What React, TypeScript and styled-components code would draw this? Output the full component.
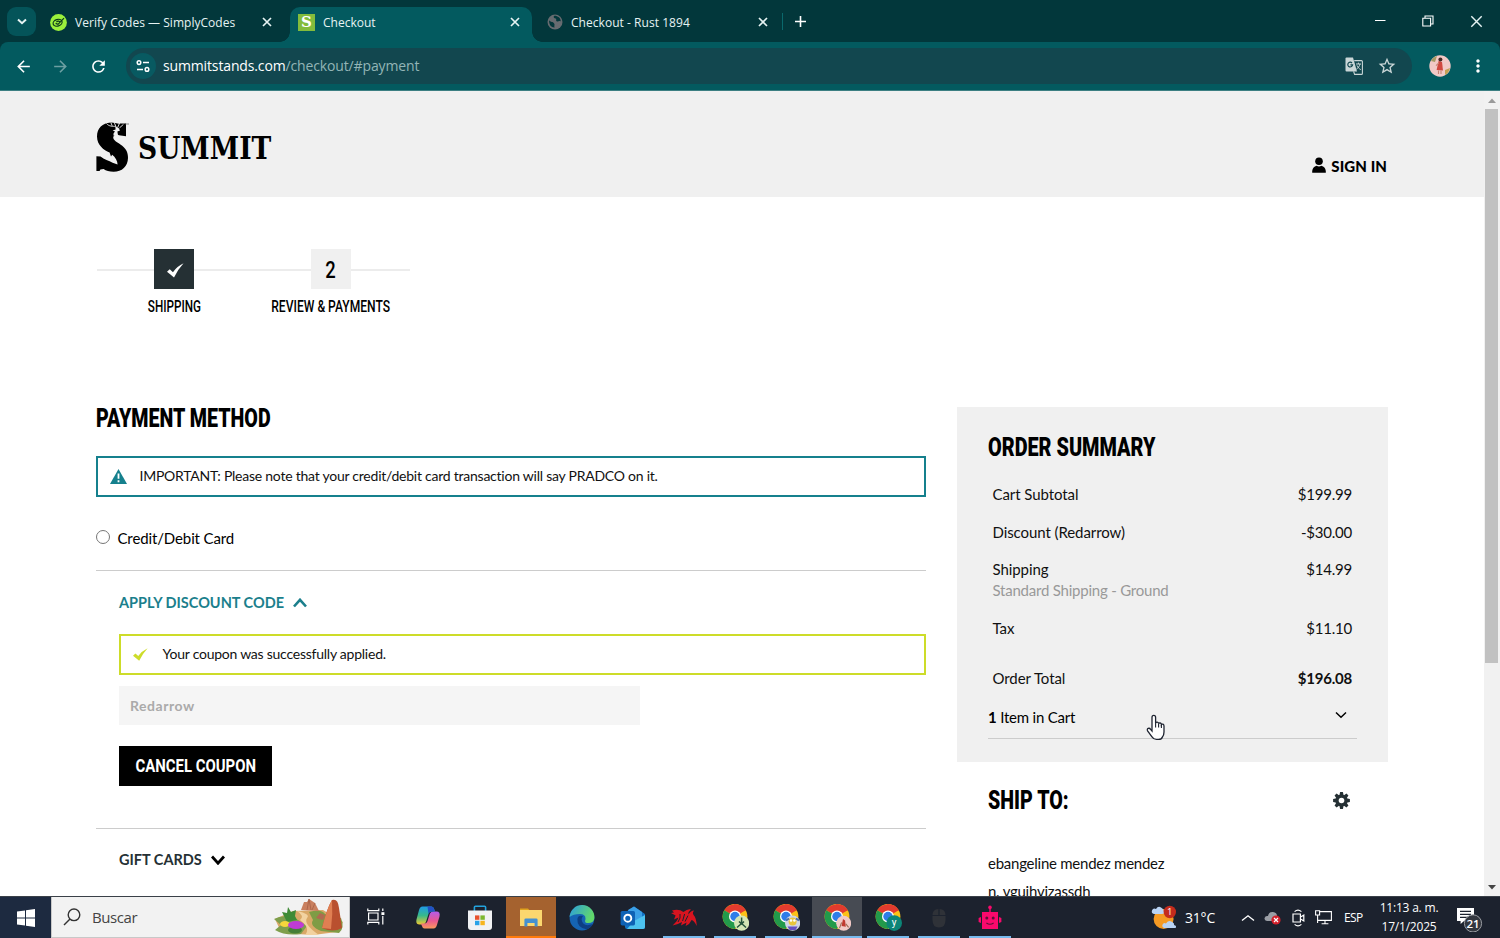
import React from "react";
import styled, { createGlobalStyle, css } from "styled-components";
import { MdArrowBack, MdArrowForward, MdRefresh, MdStarBorder, MdMoreVert } from "react-icons/md";

const ui = `"Open Sans", "Noto Sans", sans-serif`;
const body = `Lato, "Open Sans", sans-serif`;
const display = `Roboto, "Liberation Sans", sans-serif`;

const Global = createGlobalStyle`
  *, *::before, *::after { box-sizing: border-box; }
  body { margin: 0; background: #fff; overflow: hidden; }
  svg { display: block; flex: none; }
`;

const Screen = styled.div`
  display: flex;
  flex-direction: column;
  width: 1500px;
  height: 938px;
  overflow: hidden;
  position: relative;
  color: #000;
  font-family: ${body};
`;

/* ---------- text ---------- */

const Condensed = styled.span<{ $x: number; $origin?: string }>`
  display: inline-block;
  white-space: nowrap;
  transform: scaleX(${(p) => p.$x});
  transform-origin: ${(p) => p.$origin ?? "left"} center;
`;

/* ---------- browser window ---------- */

const TabStrip = styled.div`
  display: flex;
  height: 42px;
  background: #02373b;
  color: #e6f3f3;
  font: 12px/1 ${ui};
  padding-left: 7px;
`;

const TabSearch = styled.div`
  width: 29px;
  height: 29px;
  margin-top: 7px;
  border-radius: 9px;
  background: #045459;
  display: grid;
  place-items: center;
`;

const Tab = styled.div<{ $width: number; $active?: boolean; $left?: number; $right?: number }>`
  position: relative;
  display: flex;
  align-items: center;
  width: ${(p) => p.$width}px;
  height: 35px;
  margin-top: 7px;
  padding: 0 ${(p) => p.$right ?? 12}px 5px ${(p) => p.$left ?? 8}px;
  ${(p) =>
    p.$active &&
    css`
      background: #035a5f;
      border-radius: 10px 10px 0 0;
      &::before,
      &::after {
        content: "";
        position: absolute;
        bottom: 0;
        width: 10px;
        height: 10px;
      }
      &::before {
        left: -10px;
        background: radial-gradient(circle at 0 0, transparent 9.5px, #035a5f 10px);
      }
      &::after {
        right: -10px;
        background: radial-gradient(circle at 100% 0, transparent 9.5px, #035a5f 10px);
      }
    `}
`;

const TabTitle = styled.span<{ $spacing?: number }>`
  flex: 1;
  margin-left: 8px;
  padding-top: 1px;
  white-space: nowrap;
  letter-spacing: ${(p) => p.$spacing ?? 0}px;
`;

const TabDivider = styled.i`
  width: 1px;
  height: 17px;
  margin: 13px 12px 0 3px;
  background: #0a686c;
`;

const NewTab = styled.div`
  margin-top: 16px;
`;

const WindowButtons = styled.div`
  display: flex;
  gap: 36px;
  margin: 15px 17px 0 auto;
`;

const ToolbarBack = styled.div`
  background: #02373b;
`;

const Toolbar = styled.div`
  display: flex;
  align-items: center;
  height: 49px;
  padding: 0 12px 0 14px;
  background: #035a5f;
  border-bottom: 1px solid #3c7f82;
  border-radius: 8px 8px 0 0;
  color: #fff;
`;

const NavIcon = styled.span<{ $dim?: boolean; $gap: number }>`
  font-size: 19px;
  display: flex;
  margin-right: ${(p) => p.$gap}px;
  opacity: ${(p) => (p.$dim ? 0.42 : 1)};
`;

const Omnibox = styled.div`
  display: flex;
  align-items: center;
  flex: 1;
  height: 36px;
  border-radius: 18px;
  background: #12474f;
  padding: 0 15px 0 4px;
  font: 14px/1 ${ui};
  color: #fff;
`;

const SiteInfo = styled.span`
  width: 26px;
  height: 26px;
  border-radius: 50%;
  background: #085a61;
  display: grid;
  place-items: center;
  margin-right: 7px;
`;

const Url = styled.span`
  flex: 1;
  letter-spacing: -0.14px;
  em {
    font-style: normal;
    color: #93b5b6;
  }
`;

const StarButton = styled.span`
  display: flex;
  margin-left: 14px;
  font-size: 20px;
  color: #c9d6d7;
`;

const AvatarButton = styled.span`
  margin: 0 17px 0 17px;
`;

/* ---------- page ---------- */

const Viewport = styled.div`
  display: flex;
  height: 805px;
  background: #fff;
`;

const Page = styled.div`
  flex: 1;
  overflow: hidden;
  font-size: 15px;
`;

const SiteHeader = styled.header`
  height: 106px;
  padding: 30px 97px 0 96px;
  background: #f0f0f0;
  display: flex;
  justify-content: space-between;
`;

const Logo = styled.div`
  display: flex;
  height: 52px;
  font: bold 32px/52px "DejaVu Serif", serif;
`;

const Wordmark = styled.div`
  margin-left: 9px;
  padding-top: 1px;
`;

const SignIn = styled.div`
  display: flex;
  align-items: center;
  gap: 5px;
  height: 20px;
  margin-top: 35px;
  font-weight: 900;
  font-size: 15px;
  letter-spacing: 0.1px;
  svg {
    margin-bottom: 3px;
  }
`;

const Steps = styled.ol`
  display: flex;
  list-style: none;
  margin: 52px 0 0 96.5px;
  padding: 0;
  width: 313px;
  height: 158px;
`;

const Step = styled.li`
  flex: 1;
  display: flex;
  flex-direction: column;
  align-items: center;
  font: 500 16px/36px ${display};
  background: linear-gradient(#ececec, #ececec) 0 20px / 100% 2px no-repeat;
`;

const StepBadge = styled.div<{ $done?: boolean }>`
  width: 40px;
  height: 40px;
  display: grid;
  place-items: center;
  background: ${(p) => (p.$done ? "#253034" : "#f0f0f0")};
  color: ${(p) => (p.$done ? "#fff" : "#000")};
  font: 500 23px/44px ${display};
  svg {
    margin: 2px 0 0 2px;
  }
`;

const Columns = styled.main`
  display: flex;
  justify-content: space-between;
  padding: 0 96px;
`;

const Payment = styled.section`
  width: 829.5px;
`;

const Title = styled.h2`
  margin: 0;
  height: 22px;
  font: 900 25.5px/22px ${display};
`;

const Notice = styled.div<{ $tone: string; $top: number }>`
  display: flex;
  align-items: center;
  height: 41px;
  margin-top: ${(p) => p.$top}px;
  padding: 0 12px 2px;
  border: 2px solid ${(p) => p.$tone};
  color: #111;
  font-size: 14px;
  svg {
    color: ${(p) => p.$tone};
    margin-top: 2px;
  }
`;

const NoticeText = styled.span<{ $gap: number }>`
  margin-left: ${(p) => p.$gap}px;
  letter-spacing: -0.24px;
`;

const Method = styled.label`
  display: flex;
  align-items: center;
  height: 74px;
  padding-top: 9px;
  letter-spacing: -0.12px;
  border-bottom: 1px solid #ccc;
`;

const Radio = styled.i`
  width: 14px;
  height: 14px;
  border: 1px solid #767676;
  border-radius: 50%;
  margin: -2px 7.5px 0 0;
`;

const Discount = styled.section`
  padding: 21px 0 42px 23px;
  border-bottom: 1px solid #ccc;
`;

const Toggle = styled.div<{ $tone: string }>`
  display: flex;
  align-items: center;
  gap: 9px;
  height: 20px;
  color: ${(p) => p.$tone};
  font-weight: 700;
  font-size: 14.5px;
  svg {
    margin-top: 1px;
  }
`;

const CodeField = styled.div`
  width: 521px;
  height: 39px;
  margin-top: 11px;
  padding-left: 11px;
  background: #f5f5f5;
  color: #aaa;
  font: 700 14px/39px ${body};
  letter-spacing: 0.55px;
`;

const CancelButton = styled.button`
  display: block;
  width: 153px;
  height: 40px;
  margin-top: 21px;
  padding: 0;
  border: 0;
  background: #000;
  color: #fff;
  font: 700 19px/40px ${display};
`;

const CancelLabel = styled(Condensed)`
  margin: 0 -20px;
`;

const GiftCards = styled.section`
  padding: 20px 0 0 23px;
`;

const Aside = styled.aside`
  width: 431px;
`;

const Summary = styled.section`
  height: 355px;
  padding: 29px 31px 0;
  background: #f0f0f0;
`;

const Rows = styled.dl`
  margin: 26px 5px 0 4.5px;
`;

const Row = styled.div<{ $height: number; $bold?: boolean }>`
  display: flex;
  justify-content: space-between;
  height: ${(p) => p.$height}px;
  line-height: 21px;
  color: #111;
  letter-spacing: -0.08px;
  dt,
  dd {
    margin: 0;
  }
  dt small {
    display: block;
    font-size: 15px;
    letter-spacing: -0.22px;
    color: #999;
  }
  dd {
    font-weight: ${(p) => (p.$bold ? 700 : 400)};
    letter-spacing: -0.22px;
  }
`;

const CartLine = styled.div`
  display: flex;
  align-items: center;
  justify-content: space-between;
  height: 40px;
  padding: 0 10.5px 3px 0;
  margin-top: 10px;
  letter-spacing: -0.2px;
  border-bottom: 1px solid #ccc;
  svg {
    margin-bottom: 3px;
  }
`;

const ShipTo = styled.section`
  padding: 27px 38px 0 31px;
  color: #111;
  letter-spacing: -0.25px;
  p {
    margin: 0;
    line-height: 28px;
  }
`;

const ShipHead = styled.div`
  display: flex;
  justify-content: space-between;
  height: 60px;
  color: #253034;
  h2 {
    color: #000;
    letter-spacing: 0;
  }
  > svg {
    margin-top: 3px;
  }
`;

const Scrollbar = styled.div`
  display: flex;
  flex-direction: column;
  align-items: center;
  width: 16px;
  background: #f1f1f1;
  padding: 7px 1px 6px 0;
`;

const Thumb = styled.div`
  width: 13px;
  height: 554px;
  margin: 6px 0 auto;
  background: #c1c1c1;
`;

const Pointer = styled.svg`
  position: absolute;
  left: 1146px;
  top: 714px;
`;

/* ---------- taskbar ---------- */

const Taskbar = styled.footer`
  display: flex;
  height: 42px;
  background: #1c222e;
  border-top: 1px solid #3a4048;
  color: #fff;
  font: 14px/1 ${ui};
`;

const Start = styled.div`
  width: 51px;
  background: #1d2a40;
  display: grid;
  place-items: center;
`;

const Search = styled.div`
  display: flex;
  align-items: center;
  width: 299px;
  background: #f2f2f2;
  border: 1px solid #c8c8c8;
  border-top: 0;
  padding: 0 4px 0 11px;
  color: #444;
  font-size: 15px;
`;

const SearchText = styled.span`
  flex: 1;
  margin-left: 11px;
  letter-spacing: -0.4px;
`;

const TaskView = styled.div`
  width: 54px;
  padding: 11px 0 0 16.5px;
`;

const Apps = styled.div`
  display: flex;
  gap: 1px;
`;

const AppButton = styled.div<{ $bg?: string; $line?: string; $wide?: boolean }>`
  position: relative;
  width: 50px;
  display: grid;
  place-items: center;
  background: ${(p) => p.$bg ?? "transparent"};
  &::after {
    content: "";
    position: absolute;
    bottom: 0;
    left: ${(p) => (p.$wide ? 0 : 4)}px;
    right: ${(p) => (p.$wide ? 0 : 4)}px;
    height: 2px;
    background: ${(p) => p.$line ?? "transparent"};
  }
`;

const Tray = styled.div`
  display: flex;
  align-items: center;
  margin-left: auto;
  padding-right: 16px;
`;

const Temp = styled.span`
  width: 56px;
  margin-left: 8px;
  letter-spacing: -0.2px;
`;

const Lang = styled.span`
  font-size: 12px;
  letter-spacing: -0.6px;
  margin: 0 15px 0 12px;
  width: 20px;
`;

const Clock = styled.div`
  width: 60px;
  text-align: center;
  white-space: nowrap;
  font-size: 12px;
  line-height: 18.5px;
  letter-spacing: -0.2px;
  margin-right: 17px;
`;

const TrayIcon = styled.span<{ $left: number }>`
  margin-left: ${(p) => p.$left}px;
`;

/* ---------- drawings ---------- */

const Chevron = ({ w, h, stroke, up, color = "currentColor" }: { w: number; h: number; stroke: number; up?: boolean; color?: string }) => (
  <svg width={w} height={h} viewBox={`0 0 ${w} ${h}`} fill="none" stroke={color} strokeWidth={stroke}>
    <path d={up ? `M1 ${h - 1.5}L${w / 2} 1.8L${w - 1} ${h - 1.5}` : `M1 1.5L${w / 2} ${h - 1.8}L${w - 1} 1.5`} />
  </svg>
);

const Cross = ({ size, stroke }: { size: number; stroke: number }) => (
  <svg width={size} height={size} viewBox="0 0 10 10" stroke="currentColor" strokeWidth={stroke}>
    <path d="M1 1L9 9M9 1L1 9" />
  </svg>
);

const Tick = ({ size }: { size: number }) => (
  <svg width={size} height={size} viewBox="0 0 16 16" fill="currentColor">
    <path d="M0 9.2L2.6 6.8L5.6 9.6Q9.5 4 15.6 1.2Q10.2 7 6.6 14.6Q4 12.4 0 9.2Z" />
  </svg>
);

const WarningIcon = () => (
  <svg width="17" height="15" viewBox="0 0 17 15">
    <path d="M8.5 0L17 15H0Z" fill="currentColor" />
    <path d="M8.5 4.6V9.8M8.5 11.2V13.2" stroke="#fff" strokeWidth="1.8" />
  </svg>
);

const GearIcon = () => (
  <svg width="17" height="17" viewBox="-8.5 -8.5 17 17">
    <g fill="currentColor">
      {[0, 45, 90, 135].map((angle) => (
        <path key={angle} d="M-1.9 -6L-1.4 -8.4H1.4L1.9 -6V6L1.4 8.4H-1.4L-1.9 6Z" transform={`rotate(${angle})`} />
      ))}
      <circle r="6.1" />
    </g>
    <circle r="2.8" fill="#fff" />
  </svg>
);

const SimplyCodesIcon = () => (
  <svg width="17" height="17" viewBox="0 0 17 17">
    <circle cx="8.5" cy="8.5" r="8.4" fill="#9bf03c" />
    <g fill="none" stroke="#0c3a1b" strokeWidth="1.2">
      <ellipse cx="7.6" cy="8.8" rx="4.6" ry="3.3" transform="rotate(-18 7.6 8.8)" />
      <path d="M5.6 9.4L8 10.4L14 4.2M6.4 8C8 6.6 9.4 7 10 8.4" />
    </g>
  </svg>
);

const SFavicon = styled.span`
  width: 17px;
  height: 17px;
  background: #83bc3c;
  color: #fff;
  font: bold 15px/17px "DejaVu Serif", serif;
  text-align: center;
`;

const GlobeIcon = () => (
  <svg width="16" height="16" viewBox="0 0 16 16">
    <circle cx="8" cy="8" r="7.5" fill="#666b70" />
    <path d="M2.2 6.2C4 8.5 5.8 7.4 7 9.2C8.2 10.6 6.8 12 7.6 13.4C4.4 13.6 1.6 10.4 2.2 6.2ZM7.4 1.8C5.6 3.4 7.6 4.2 8.8 4.6C10 5.2 8.4 6.6 9.6 7.2C11.2 8 12 6.2 13.8 7.4C13.6 4 11 1.8 7.4 1.8Z" fill="#02373b" />
  </svg>
);

const TranslateIcon = () => (
  <svg width="18" height="18" viewBox="0 0 18 18">
    <path d="M1.5 0.5H8L12 14.5H1.5Q0.5 14.5 0.5 13.5V1.5Q0.5 0.5 1.5 0.5Z" fill="#c9d6d7" />
    <path d="M9.2 3.6H16.4Q17.4 3.6 17.4 4.6V16.4Q17.4 17.4 16.4 17.4H9.6L8.6 14.4" fill="none" stroke="#c9d6d7" strokeWidth="1.1" />
    <path d="M11 7H16M13.4 5.6V7M15 7C14.4 9.4 13 11.2 11.4 12.2M12 8.4C12.8 10.4 14 11.6 15.8 12.6" fill="none" stroke="#c9d6d7" strokeWidth="1" />
    <path d="M7 6A2.4 2.4 0 1 0 7.6 7.8H5.4" fill="none" stroke="#12474f" strokeWidth="1.2" />
  </svg>
);

const Avatar = ({ size }: { size: number }) => (
  <svg width={size} height={size} viewBox="0 0 22 22">
    <circle cx="11" cy="11" r="10.7" fill="#f2c9c6" />
    <path d="M2 6Q4 2 8 1L6 7Z" fill="#a59a63" />
    <path d="M16 15L21 13Q20 18 16 20Z" fill="#c2a052" />
    <path d="M9.6 6L13 7L14 15.6L7.6 15Z" fill="#d0483f" />
    <circle cx="11.4" cy="4.4" r="2" fill="#452924" />
    <path d="M9.5 15.5V19M12 15.5V19M9.8 8L7 10.6" stroke="#c68372" strokeWidth="1.1" fill="none" />
  </svg>
);

const DeerMark = () => (
  <svg width="33" height="52" viewBox="0 0 33 52">
    <path
      fill="#000"
      d="M30 2.5V15.2L23 14.2C20.5 12.6 17.5 14 17.2 16.6C17.4 19.6 21 21 24.4 23.4C29.6 26.8 32.2 31 32 37C31.8 45.4 26 50.8 17.6 50.8C13.4 50.8 10 49.8 7.6 48L4.4 48.4L3.6 50H0.4V35.2L4.6 35.4C8 38.4 13 39.4 16.6 41.8L21.6 43.4C21.4 40 19.4 36.4 16.2 33.8L15 35.6L13.6 31.6C7.6 28.6 1.2 24.4 1 15.4C1 7.4 6.6 2 14.6 1.6C18 1.4 21.6 3 24 2.6Z"
    />
    <path fill="none" stroke="#f0f0f0" strokeWidth="0.9" d="M10.6 2.6C13 5.6 16.6 5.2 19.6 5.4M14.8 1.4L16.2 4.8M18 0.8L20.2 6.4M23.6 2L21.6 6.6M27.4 3.4L23.4 7" />
    <path fill="#f0f0f0" d="M19.4 5.6L22.6 7L24 9.4L21.4 10.4L22 14.4L17.4 14.6Q17 12 19 10.4L16.6 9.6L19.6 8.6Z" />
    <path d="M29 3H33" stroke="#555" strokeWidth="0.7" />
  </svg>
);

const PersonIcon = () => (
  <svg width="14" height="16" viewBox="0 0 14 16">
    <circle cx="7" cy="4.2" r="3.8" />
    <path d="M0.2 15.8V14Q0.8 9.6 4.6 8.8Q7 10.4 9.4 8.8Q13.2 9.6 13.8 14V15.8Z" />
  </svg>
);

const ChromeLogo = ({ children }: { children?: React.ReactNode }) => (
  <svg width="28" height="28" viewBox="-1 0.5 28 28">
    <circle cx="13" cy="13" r="12.4" fill="#fbc116" />
    <path d="M13 13L2.3 6.8A12.4 12.4 0 0 1 23.7 6.8Z" fill="#e33b2e" />
    <path d="M13 13L2.3 6.8A12.4 12.4 0 0 0 13 25.4L18.4 16Z" fill="#229a4b" />
    <path d="M13 7H23.8A12.4 12.4 0 0 0 12 .7Z" fill="#e33b2e" />
    <circle cx="13" cy="13" r="6" fill="#fff" />
    <circle cx="13" cy="13" r="4.7" fill="#2f7de9" />
    {children}
  </svg>
);

const Scenery = () => (
  <svg width="72" height="38" viewBox="0 0 72 38">
    <path d="M2 21L20 13L50 12L70 24L64 34L40 37L24 36L8 34Z" fill="#d9a867" />
    <path d="M1 21Q10 16 22 20L34 28L28 36Q12 38 2 32L8 27Z" fill="#7f9f4c" />
    <path d="M36 14Q48 10 52 16L68 20Q72 30 66 35L48 33Q36 28 40 22Z" fill="#7f9c45" />
    <path d="M24 13Q38 16 34 20Q30 26 46 37H32Q38 30 27 22Q32 18 24 13Z" fill="#f2d2a0" />
    <path d="M28 12L31 4L34 4L36 1L39 3L42 5L46 13Z" fill="#c9805f" />
    <path d="M34 12L36 1L38 12M39 12L42 5" stroke="#a65f45" strokeWidth="0.8" fill="none" />
    <path d="M49 30Q54 10 59 2Q65 0 66 10L69 30Q60 35 49 30Z" fill="#b9502f" />
    <path d="M59 2Q60 16 58 31L49 30Q54 10 59 2Z" fill="#e07f52" />
    <path d="M43 20L47 15L52 17L50 22Z" fill="#b06a50" />
    <path d="M12 20L9 14L14 15L15 9L18 14L23 12L22 18L24 22L14 24Z" fill="#3f8a35" />
    <ellipse cx="12" cy="26" rx="5" ry="3" fill="#f5d63c" />
    <ellipse cx="22" cy="32" rx="7" ry="3.5" fill="#457f37" />
    <ellipse cx="23" cy="27" rx="8" ry="4" fill="#bf3bd4" />
  </svg>
);

const blue = "#76b9ed";

export default function App() {
  return (
    <Screen>
      <Global />
      <TabStrip>
        <TabSearch>
          <Chevron w={10} h={7} stroke={2} />
        </TabSearch>
        <Tab $width={254} $left={14} $right={18}>
          <SimplyCodesIcon />
          <TabTitle $spacing={0.03}>Verify Codes — SimplyCodes</TabTitle>
          <Cross size={10} stroke={1.7} />
        </Tab>
        <Tab $width={242} $active>
          <SFavicon>S</SFavicon>
          <TabTitle>Checkout</TabTitle>
          <Cross size={10} stroke={1.7} />
        </Tab>
        <Tab $width={247} $left={15} $right={11}>
          <GlobeIcon />
          <TabTitle $spacing={0.04}>Checkout - Rust 1894</TabTitle>
          <Cross size={10} stroke={1.7} />
        </Tab>
        <TabDivider />
        <NewTab>
          <svg width="11" height="11" viewBox="0 0 11 11" stroke="#fff" strokeWidth="1.6">
            <path d="M5.5 0V11M0 5.5H11" />
          </svg>
        </NewTab>
        <WindowButtons>
          <svg width="12" height="12" viewBox="0 0 12 12" stroke="#fff">
            <path d="M1 5.5H11.5" />
          </svg>
          <svg width="12" height="12" viewBox="0 0 12 12" fill="none" stroke="#fff" strokeWidth="1.1">
            <path d="M0.8 3.2H8.6V11H0.8ZM3 3V1H11V9H8.8" />
          </svg>
          <Cross size={13} stroke={1.1} />
        </WindowButtons>
      </TabStrip>
      <ToolbarBack>
        <Toolbar>
          <NavIcon $gap={18}><MdArrowBack /></NavIcon>
          <NavIcon $gap={19} $dim><MdArrowForward /></NavIcon>
          <NavIcon $gap={18}><MdRefresh /></NavIcon>
          <Omnibox>
            <SiteInfo>
              <svg width="14" height="12" viewBox="0 0 14 12" fill="none" stroke="#fff" strokeWidth="1.5">
                <circle cx="3" cy="2.6" r="1.8" />
                <path d="M7 2.6H13M1 9.4H7" />
                <circle cx="11" cy="9.4" r="1.8" />
              </svg>
            </SiteInfo>
            <Url>summitstands.com<em>/checkout/#payment</em></Url>
            <TranslateIcon />
            <StarButton><MdStarBorder /></StarButton>
          </Omnibox>
          <AvatarButton><Avatar size={22} /></AvatarButton>
          <MdMoreVert size={20} />
        </Toolbar>
      </ToolbarBack>

      <Viewport>
        <Page>
          <SiteHeader>
            <Logo>
              <DeerMark />
              <Wordmark><Condensed $x={0.83}>SUMMIT</Condensed></Wordmark>
            </Logo>
            <SignIn>
              <PersonIcon />
              SIGN IN
            </SignIn>
          </SiteHeader>
          <Steps>
            <Step>
              <StepBadge $done><Tick size={17} /></StepBadge>
              <Condensed $x={0.73} $origin="center">SHIPPING</Condensed>
            </Step>
            <Step>
              <StepBadge><Condensed $x={0.8} $origin="center">2</Condensed></StepBadge>
              <Condensed $x={0.755} $origin="center">REVIEW &amp; PAYMENTS</Condensed>
            </Step>
          </Steps>
          <Columns>
            <Payment>
              <Title><Condensed $x={0.77}>PAYMENT METHOD</Condensed></Title>
              <Notice $tone="#15808d" $top={27}>
                <WarningIcon />
                <NoticeText $gap={12.5}>IMPORTANT: Please note that your credit/debit card transaction will say PRADCO on it.</NoticeText>
              </Notice>
              <Method><Radio />Credit/Debit Card</Method>
              <Discount>
                <Toggle $tone="#1b7f8c">
                  APPLY DISCOUNT CODE
                  <Chevron w={14} h={10} stroke={2.6} up />
                </Toggle>
                <Notice $tone="#cddc29" $top={22}>
                  <Tick size={15} />
                  <NoticeText $gap={14.5}>Your coupon was successfully applied.</NoticeText>
                </Notice>
                <CodeField>Redarrow</CodeField>
                <CancelButton><CancelLabel $x={0.785} $origin="center">CANCEL COUPON</CancelLabel></CancelButton>
              </Discount>
              <GiftCards>
                <Toggle $tone="#253034">
                  GIFT CARDS
                  <Chevron w={14} h={10} stroke={2.8} color="#000" />
                </Toggle>
              </GiftCards>
            </Payment>
            <Aside>
              <Summary>
                <Title><Condensed $x={0.778}>ORDER SUMMARY</Condensed></Title>
                <Rows>
                  <Row $height={37.5}><dt>Cart Subtotal</dt><dd>$199.99</dd></Row>
                  <Row $height={37.5}><dt>Discount (Redarrow)</dt><dd>-$30.00</dd></Row>
                  <Row $height={58.5}><dt>Shipping<small>Standard Shipping - Ground</small></dt><dd>$14.99</dd></Row>
                  <Row $height={50}><dt>Tax</dt><dd>$11.10</dd></Row>
                  <Row $height={21} $bold><dt>Order Total</dt><dd>$196.08</dd></Row>
                </Rows>
                <CartLine>
                  <span><b>1</b> Item in Cart</span>
                  <Chevron w={12} h={8} stroke={1.5} />
                </CartLine>
              </Summary>
              <ShipTo>
                <ShipHead>
                  <Title><Condensed $x={0.77}>SHIP TO:</Condensed></Title>
                  <GearIcon />
                </ShipHead>
                <p>ebangeline mendez mendez</p>
                <p>n. vguihvizassdh</p>
              </ShipTo>
            </Aside>
          </Columns>
        </Page>
        <Scrollbar>
          <svg width="8" height="5" viewBox="0 0 8 5"><path d="M0 5L4 0.6L8 5Z" fill="#9a9a9a" /></svg>
          <Thumb />
          <svg width="8" height="5" viewBox="0 0 8 5"><path d="M0 0L4 4.4L8 0Z" fill="#444" /></svg>
        </Scrollbar>
      </Viewport>

      <Pointer width="20" height="27" viewBox="0 0 20 27">
        <path
          d="M6 15V3.4Q6 1.4 7.8 1.4T9.6 3.4V9.2Q9.8 8 11.2 8.2T12.6 9.8Q13 8.8 14.2 9T15.4 10.6Q16 9.8 17 10.2T18 12V18Q18 21 16.4 23Q15.8 25.4 12.4 25.4H10.4Q7.6 25.4 5.8 22.6L1.6 16.8Q0.8 15 2.2 14.4T4.6 15.4L6 17Z"
          fill="#fff"
          stroke="#1e2330"
          strokeWidth="1.3"
        />
        <path d="M9.6 9V13.4M12.6 10V13.6M15.4 11V14" stroke="#1e2330" strokeWidth="1.1" />
      </Pointer>

      <Taskbar>
        <Start>
          <svg width="18" height="18" viewBox="0 0 18 18" fill="#fff">
            <path d="M0 2.6L8 1.4V8.5H0ZM9 1.2L18 0V8.5H9ZM0 9.5H8V16.6L0 15.4ZM9 9.5H18V18L9 16.8Z" />
          </svg>
        </Start>
        <Search>
          <svg width="18" height="18" viewBox="0 0 18 18" fill="none" stroke="#333" strokeWidth="1.4">
            <circle cx="11" cy="6.8" r="5.8" />
            <path d="M7 11L1 17" />
          </svg>
          <SearchText>Buscar</SearchText>
          <Scenery />
        </Search>
        <TaskView>
          <svg width="18" height="17" viewBox="0 0 18 17" fill="none" stroke="#fff" strokeWidth="1.2">
            <path d="M0.8 0.4V2.6H11.8V0.4M1.6 5H11V12H1.6ZM0.8 16.6V14.4H11.8V16.6M15.8 0.4V3M15.8 8V16.4" />
            <path d="M14.4 4.2H17.4V7H14.4Z" fill="#fff" stroke="none" />
          </svg>
        </TaskView>
        <Apps>
          <AppButton>
            <svg width="26" height="24" viewBox="0.5 0.5 26 24">
              <defs>
                <linearGradient id="cpA" x1="0" y1="0" x2="0" y2="1"><stop offset="0" stopColor="#1f9be8" /><stop offset=".5" stopColor="#37b98b" /><stop offset="1" stopColor="#f0c930" /></linearGradient>
                <linearGradient id="cpB" x1="0" y1="0" x2="0" y2="1"><stop offset="0" stopColor="#b35bea" /><stop offset=".55" stopColor="#e9588f" /><stop offset="1" stopColor="#fb9a5c" /></linearGradient>
              </defs>
              <path d="M7 1H16Q18 1 18.8 4L19.4 6H16Q13.6 6 12.8 9L10.6 16Q9.6 19 7 19H4Q0 19 1 14L3.4 5Q4.4 1 7 1Z" fill="url(#cpA)" />
              <path d="M18 23H9Q7 23 6.2 20L5.6 18H9Q11.4 18 12.2 15L14.4 8Q15.4 6 18 6H21Q25 6 24 11L21.6 19Q20.6 23 18 23Z" fill="url(#cpB)" />
              <path d="M12 1H16Q18 1 18.8 4L19.4 6H16Q14 6 13 8.4Z" fill="#2351c4" />
            </svg>
          </AppButton>
          <AppButton>
            <svg width="26" height="26" viewBox="0 0 26 26">
              <path d="M7.4 7V2.2Q7.4 1.2 8.4 1.2H17.6Q18.6 1.2 18.6 2.2V7" fill="none" stroke="#23a3dd" strokeWidth="1.6" />
              <path d="M1 5.6H25V22Q25 25 22 25H4Q1 25 1 22Z" fill="#f1f2f4" />
              <path d="M8 10.4H12.4V14.8H8Z" fill="#e8512c" /><path d="M13.4 10.4H17.8V14.8H13.4Z" fill="#7db72f" />
              <path d="M8 15.8H12.4V20.2H8Z" fill="#2aa3e8" /><path d="M13.4 15.8H17.8V20.2H13.4Z" fill="#f7b51e" />
            </svg>
          </AppButton>
          <AppButton $bg="#a5622f" $line="#ff7a0c" $wide>
            <svg width="24" height="20" viewBox="0 0.6 24 20">
              <path d="M1 1H9L11 3.4H1Z" fill="#e0a21d" />
              <path d="M1 2.6H23V18.6H1Z" fill="#fbd76f" />
              <path d="M5.4 19V12.4Q5.4 11 6.8 11H17.2Q18.6 11 18.6 12.4V19H15.6V15.6H8.4V19Z" fill="#4590d0" />
            </svg>
          </AppButton>
          <AppButton>
            <svg width="26" height="26" viewBox="0 0 26 26">
              <defs><linearGradient id="edge" x1="0" y1="0" x2="1" y2="0.4"><stop offset="0" stopColor="#2a9de0" /><stop offset="1" stopColor="#62d86a" /></linearGradient></defs>
              <circle cx="13" cy="13" r="12.4" fill="#1564b4" />
              <path d="M0.6 12A12.4 12.4 0 0 1 25.4 13Q25 18 19.4 18Q15 18 16.4 14.8Q17.2 9 11 9Q4 9 0.6 12Z" fill="url(#edge)" />
              <path d="M8.4 14Q7.8 23 18 24.4Q22.4 22.4 24 19Q14 22.6 12.6 14.8Q12.6 12.4 14 11Q9 9.6 8.4 14Z" fill="#0d3f83" />
            </svg>
          </AppButton>
          <AppButton>
            <svg width="26" height="26" viewBox="0 0 26 26">
              <path d="M3 9L14 1.6L25 9V22Q25 24 23 24H7Q5 24 5 22Z" fill="#1273c5" />
              <path d="M8 5L14 1.6L22 7V15L12 17Z" fill="#3a9fe6" />
              <path d="M25 10V22Q25 24 23 24H7L14 16Z" fill="#4cc2ef" />
              <rect x="0.6" y="6" width="14.4" height="14.4" rx="1.6" fill="#0e62b5" />
              <circle cx="7.8" cy="13.2" r="3.5" fill="none" stroke="#fff" strokeWidth="1.9" />
            </svg>
          </AppButton>
          <AppButton $line={blue}>
            <svg width="26" height="18" viewBox="0 0 26 18" fill="#d8141f">
              <path d="M0 4L3 3.4L1 1.4Q8 -0.6 12.4 3Q17 -0.4 20 0.6Q17 3 17.4 5.4Q20 1.6 23 1.4Q21 4 22.6 6Q25.4 9 25.8 17Q23 11.6 20.6 11L18 15L14.6 17L15.6 13.6L10 16.4L11 13Q7 15.6 1.6 16.4Q6.6 12 7.4 8.6L3 10.6L4.6 6.6Z" />
              <path d="M9 5Q10 9 7 13M13.6 5L11.6 12M17 6.6L14 12.6" stroke="#1c222e" strokeWidth="1" fill="none" />
            </svg>
          </AppButton>
          <AppButton $line={blue}>
            <ChromeLogo>
              <circle cx="19.6" cy="19.6" r="7.6" fill="#d3e6b5" />
              <path d="M19.6 14V20L15 24M19.6 20L24 24M17 18L19.6 20.4L22 18" stroke="#24553b" strokeWidth="1.5" fill="none" />
            </ChromeLogo>
          </AppButton>
          <AppButton $line={blue}>
            <ChromeLogo>
              <circle cx="19.6" cy="19.6" r="7.6" fill="#cfd5e6" />
              <circle cx="19.6" cy="18" r="4" fill="#e8c53c" />
              <circle cx="18" cy="17" r="1.3" fill="#fff" /><circle cx="21.4" cy="17" r="1.3" fill="#fff" />
              <path d="M14.6 23H24.6L22.6 26.4H16.6Z" fill="#6650c0" />
              <path d="M13 17L16 15M26 17L23 15" stroke="#4a6da8" strokeWidth="2" />
            </ChromeLogo>
          </AppButton>
          <AppButton $bg="#474b53" $line={blue} $wide>
            <ChromeLogo>
              <g transform="translate(12 12) scale(.7)">
                <circle cx="11" cy="11" r="10.7" fill="#f2c9c6" />
                <path d="M10 5L13 7L14 16L8 15Z" fill="#c0392f" />
                <path d="M8 10L5 18M14 12L18 17" stroke="#9b6a52" strokeWidth="1.5" />
              </g>
            </ChromeLogo>
          </AppButton>
          <AppButton $line={blue}>
            <ChromeLogo>
              <circle cx="19.2" cy="19.6" r="7.8" fill="#0c8577" />
              <text x="19.2" y="22.4" fontSize="10" fontFamily="Roboto" fill="#fff" textAnchor="middle">y</text>
            </ChromeLogo>
          </AppButton>
          <AppButton $line={blue}>
            <svg width="14" height="20" viewBox="0 0 14 20">
              <path d="M0.5 8H13.5V12Q13.5 19.5 7 19.5T0.5 12ZM0.5 7Q0.5 1.4 6.4 1V7ZM7.6 1Q13.5 1.4 13.5 7H7.6Z" fill="#2f3238" />
            </svg>
          </AppButton>
          <AppButton $line={blue}>
            <svg width="24" height="25" viewBox="0 0 24 25">
              <circle cx="12" cy="2.4" r="1.8" fill="#f8096c" />
              <path d="M11.3 3H12.7V7H11.3ZM4 7H20V24H4ZM3 12V18L0.6 17V13ZM21 12V18L23.4 17V13Z" fill="#f8096c" />
              <circle cx="8.8" cy="13" r="1.5" fill="#5b1037" /><circle cx="15.2" cy="13" r="1.5" fill="#5b1037" />
              <path d="M8.4 18Q12 20.6 15.6 18" stroke="#5b1037" strokeWidth="1.1" fill="none" />
            </svg>
          </AppButton>
        </Apps>
        <Tray>
          <svg width="26" height="26" viewBox="0 0 26 26">
            <circle cx="12.6" cy="14" r="10" fill="#f59a23" />
            <path d="M3 9Q0 8 1 5.4T5 4Q7 .6 10 2.4T13 6Q14 9 11 9Z" fill="#b9d3f4" />
            <path d="M13 23Q10.6 22 11.6 19.6T15 18.6Q17 14.6 20.4 16.6T23 20Q26 20.6 24.6 23Z" fill="#b9d3f4" />
            <circle cx="18.8" cy="7" r="6.2" fill="#c42b1c" />
            <text x="18.8" y="10.4" fontSize="9.5" fontFamily="Open Sans" fill="#fff" textAnchor="middle">1</text>
          </svg>
          <Temp>31°C</Temp>
          <Chevron w={14} h={8} stroke={1.4} up />
          <TrayIcon $left={9}>
            <svg width="17" height="15" viewBox="0 0 17 15">
              <path d="M3 11Q0 10.6 .6 8T4 6Q5 1.4 9 2T13 6Q16 7 15 11Z" fill="#9a9ea5" />
              <circle cx="12" cy="10" r="4.6" fill="#d3202b" />
              <path d="M10 8L14 12M14 8L10 12" stroke="#fff" strokeWidth="1.2" />
            </svg>
          </TrayIcon>
          <TrayIcon $left={11}>
            <svg width="13" height="18" viewBox="0 0 13 18" fill="none" stroke="#fff" strokeWidth="1.2">
              <path d="M1 5H8.4V13H1ZM8.6 8L11.8 6V12L8.6 10M2.6 2.6Q6 -.4 9.4 2.6M2.6 15.4Q6 18.4 9.4 15.4" />
            </svg>
          </TrayIcon>
          <TrayIcon $left={10}>
            <svg width="17" height="15" viewBox="0 0 17 15" fill="none" stroke="#fff" strokeWidth="1.1">
              <path d="M5 1.6H16.4V10.4H3M10 10.4V13.6M6.6 13.8H13.4M0.6 0.8H4.6V5H0.6ZM2.6 5V13" />
            </svg>
          </TrayIcon>
          <Lang>ESP</Lang>
          <Clock>
            <div>11:13 a. m.</div>
            <div>17/1/2025</div>
          </Clock>
          <svg width="28" height="28" viewBox="0 0 28 28">
            <path d="M1 4H18V17H8L4.6 20V17H1Z" fill="#fff" />
            <path d="M4 7.4H15M4 10.4H15M4 13.4H12" stroke="#1c222e" strokeWidth="1.2" />
            <circle cx="17" cy="19.4" r="8.6" fill="#33373f" stroke="#9a9da2" />
            <text x="17" y="23.6" fontSize="11.5" fontWeight="600" fontFamily="Open Sans" fill="#fff" textAnchor="middle">21</text>
          </svg>
        </Tray>
      </Taskbar>
    </Screen>
  );
}
